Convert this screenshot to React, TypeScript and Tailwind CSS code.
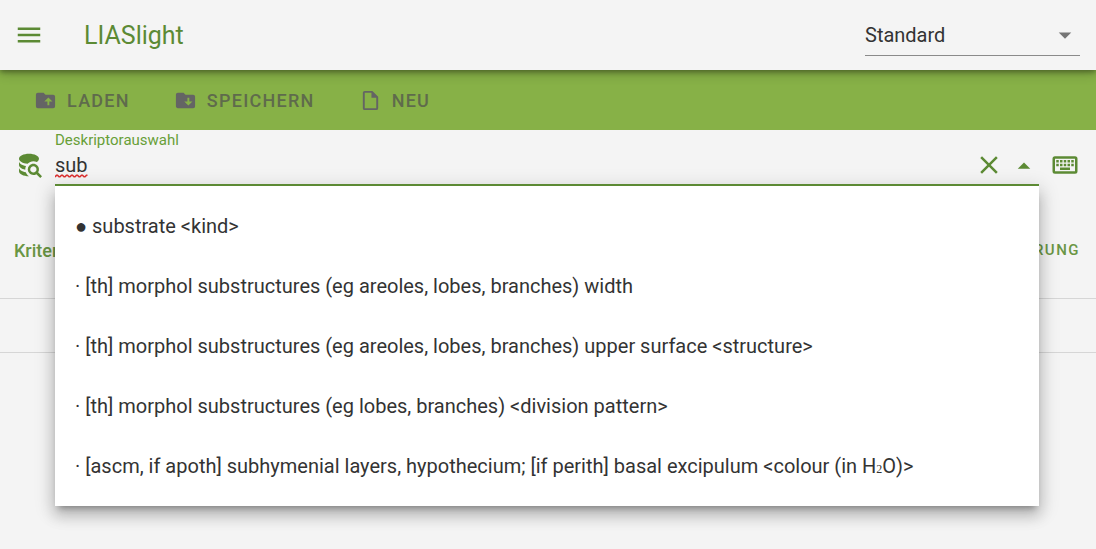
import { useState } from 'react';

const ICONS = {
  menu: 'M3,6H21V8H3V6M3,11H21V13H3V11M3,16H21V18H3V16Z',
  folderUpload:
    'M20,6A2,2 0 0,1 22,8V18A2,2 0 0,1 20,20H4A2,2 0 0,1 2,18V6A2,2 0 0,1 4,4H10L12,6H20M10.75,13H14V17H16V13H19.25L15,8.75',
  folderDownload:
    'M20,6A2,2 0 0,1 22,8V18A2,2 0 0,1 20,20H4C2.89,20 2,19.1 2,18V6C2,4.89 2.89,4 4,4H10L12,6H20M19.25,13H16V9H14V13H10.75L15,17.25',
  file: 'M14,2H6A2,2 0 0,0 4,4V20A2,2 0 0,0 6,22H18A2,2 0 0,0 20,20V8L14,2M18,20H6V4H13V9H18V20Z',
  databaseSearch:
    'M18.68,12.32C16.92,10.56 14.07,10.57 12.32,12.33C10.56,14.09 10.56,16.94 12.32,18.69C13.81,20.17 16.11,20.43 17.89,19.32L21,22.39L22.39,21L19.3,17.89C20.43,16.12 20.17,13.8 18.68,12.32M17.27,17.27C16.29,18.25 14.71,18.24 13.73,17.27C12.76,16.29 12.76,14.71 13.74,13.73C14.71,12.76 16.29,12.76 17.27,13.73C18.24,14.71 18.24,16.29 17.27,17.27M10.9,20.1C10.25,19.44 9.74,18.65 9.42,17.78C6.27,17.25 4,15.76 4,14V17C4,19.21 7.58,21 12,21V21C11.6,20.74 11.23,20.44 10.9,20.1M4,9V12C4,13.68 6.07,15.12 9,15.7C9,15.63 9,15.57 9,15.5C9,14.57 9.2,13.65 9.58,12.81C6.34,12.3 4,10.79 4,9M12,3C7.58,3 4,4.79 4,7C4,9 7,10.68 10.85,11H10.9C12.1,9.74 13.76,9 15.5,9C16.41,9 17.31,9.19 18.14,9.56C19.17,9.09 19.87,8.12 20,7C20,4.79 16.42,3 12,3Z',
  close:
    'M19,6.41L17.59,5L12,10.59L6.41,5L5,6.41L10.59,12L5,17.59L6.41,19L12,13.41L17.59,19L19,17.59L13.41,12L19,6.41Z',
  menuUp: 'M7,15L12,10L17,15H7Z',
  menuDown: 'M7,10L12,15L17,10H7Z',
  keyboard:
    'M4,5A2,2 0 0,0 2,7V17A2,2 0 0,0 4,19H20A2,2 0 0,0 22,17V7A2,2 0 0,0 20,5H4M4,7H20V17H4V7M5,8V10H7V8H5M8,8V10H10V8H8M11,8V10H13V8H11M14,8V10H16V8H14M17,8V10H19V8H17M5,11V13H7V11H5M8,11V13H10V11H8M11,11V13H13V11H11M14,11V13H16V11H14M17,11V13H19V11H17M8,14V16H16V14H8Z',
};

function Icon({ name, className }: { name: keyof typeof ICONS; className: string }) {
  return (
    <svg viewBox="0 0 24 24" fill="currentColor" aria-hidden="true" className={`shrink-0 ${className}`}>
      <path d={ICONS[name]} />
    </svg>
  );
}

const OPTIONS = [
  '● substrate <kind>',
  '· [th] morphol substructures (eg areoles, lobes, branches) width',
  '· [th] morphol substructures (eg areoles, lobes, branches) upper surface <structure>',
  '· [th] morphol substructures (eg lobes, branches) <division pattern>',
  '· [ascm, if apoth] subhymenial layers, hypothecium; [if perith] basal excipulum <colour (in H₂O)>',
];

const ACTIONS: { label: string; icon: keyof typeof ICONS }[] = [
  { label: 'LADEN', icon: 'folderUpload' },
  { label: 'SPEICHERN', icon: 'folderDownload' },
  { label: 'NEU', icon: 'file' },
];

function OptionText({ text }: { text: string }) {
  const [before, after] = text.split('₂');
  if (after === undefined) return <span>{text}</span>;
  return (
    <span>
      {before}
      <sub className="bottom-0 font-['Liberation_Serif',serif] text-xs leading-none">2</sub>
      {after}
    </span>
  );
}

export default function App() {
  const [query, setQuery] = useState('sub');
  const [open, setOpen] = useState(true);

  return (
    <div className="min-h-screen bg-[#f4f4f4] font-[Roboto,sans-serif] text-xl text-[#333333]">
      <header className="relative z-10 flex h-[70px] items-center bg-[#f4f4f4] pr-4 pl-3.5 shadow-[0_2px_5px_rgba(0,0,0,0.35),0_5px_10px_rgba(0,0,0,0.16)]">
        <button aria-label="Menü" className="text-[#5c8a34]">
          <Icon name="menu" className="size-[30px]" />
        </button>
        <h1 className="ml-10 text-[25px] text-[#5c8a34]">LIASlight</h1>
        <div className="relative mt-px ml-auto flex w-[215px] items-center border-b border-[#8a8a8a]">
          <select aria-label="Modus" className="h-10 w-full appearance-none bg-transparent outline-none">
            <option>Standard</option>
          </select>
          <Icon name="menuDown" className="pointer-events-none absolute right-0 size-[30px] text-[#757575]" />
        </div>
      </header>

      <nav className="flex h-[60px] items-center gap-11 bg-[#87b147] px-[34px] pt-0.5">
        {ACTIONS.map(({ label, icon }) => (
          <button
            key={label}
            className="flex items-center gap-2.5 text-lg font-medium tracking-[0.07em] text-[#5f6b4c]"
          >
            <Icon name={icon} className="-mt-0.5 size-[23px] text-[#646464]" />
            {label}
          </button>
        ))}
      </nav>

      <main>
        <div className="flex items-start pr-4 pl-3.5">
          <Icon name="databaseSearch" className="mt-5 size-[30px] text-[#5c8a34]" />
          <div className="relative ml-[11px] min-w-0 flex-1">
            <div className="relative z-20 flex h-14 items-end border-b-2 border-[#5c8a34]">
              <div className="relative flex h-full min-w-0 flex-1 flex-col">
                <label htmlFor="descriptor" className="text-[15px] leading-5 text-[#689f38]">
                  Deskriptorauswahl
                </label>
                <input
                  id="descriptor"
                  type="text"
                  value={query}
                  spellCheck={false}
                  onChange={(e) => setQuery(e.target.value)}
                  className="h-[30px] w-full bg-transparent outline-none"
                />
                {query === 'sub' && (
                  <svg
                    viewBox="0 0 33 4"
                    fill="none"
                    stroke="#d93030"
                    aria-hidden="true"
                    className="pointer-events-none absolute top-11 left-0 h-1 w-[33px]"
                  >
                    <path
                      strokeWidth="1.6"
                      d="M0,3L1.5,1.2H2.5L4,2.8H5L6.5,1.2H7.5L9,2.8H10L11.5,1.2H12.5L14,2.8H15L16.5,1.2H17.5L19,2.8H20L21.5,1.2H22.5L24,2.8H25L26.5,1.2H27.5L29,2.8H30L31.5,1.2H32.5"
                    />
                  </svg>
                )}
              </div>
              <div className="flex h-full items-center gap-[5px] pt-4 text-[#5c8a34]">
                <button aria-label="Eingabe löschen" onClick={() => setQuery('')}>
                  <Icon name="close" className="size-[30px]" />
                </button>
                <button aria-label="Liste umschalten" onClick={() => setOpen(!open)}>
                  <Icon name="menuUp" className="size-[30px]" />
                </button>
              </div>
            </div>
            {open && (
              <ul
                role="listbox"
                aria-label="Deskriptorauswahl"
                className="absolute top-full right-0 left-0 z-10 bg-white py-2.5 shadow-[0_6px_6px_-4px_rgba(0,0,0,0.3),0_10px_13px_1px_rgba(0,0,0,0.15),0_4px_18px_3px_rgba(0,0,0,0.14)]"
              >
                {OPTIONS.map((option) => (
                  <li key={option} role="option" aria-selected={false} className="flex h-[60px] items-center px-5">
                    <OptionText text={option} />
                  </li>
                ))}
              </ul>
            )}
          </div>
          <button aria-label="Bildschirmtastatur" className="mt-5 ml-[11px] text-[#5c8a34]">
            <Icon name="keyboard" className="size-[30px]" />
          </button>
        </div>

        <section className="mt-10">
          <div className="flex h-[73px] items-center justify-between border-b border-[#d6d6d6] pr-4 pb-[23px] pl-3.5 text-[#6a9644]">
            <h2 className="text-lg font-medium">Kriterien</h2>
            <button className="text-[15px] font-medium tracking-widest">FILTERUNG</button>
          </div>
          <div className="h-[54px] border-b border-[#d6d6d6]" />
        </section>
      </main>
    </div>
  );
}
